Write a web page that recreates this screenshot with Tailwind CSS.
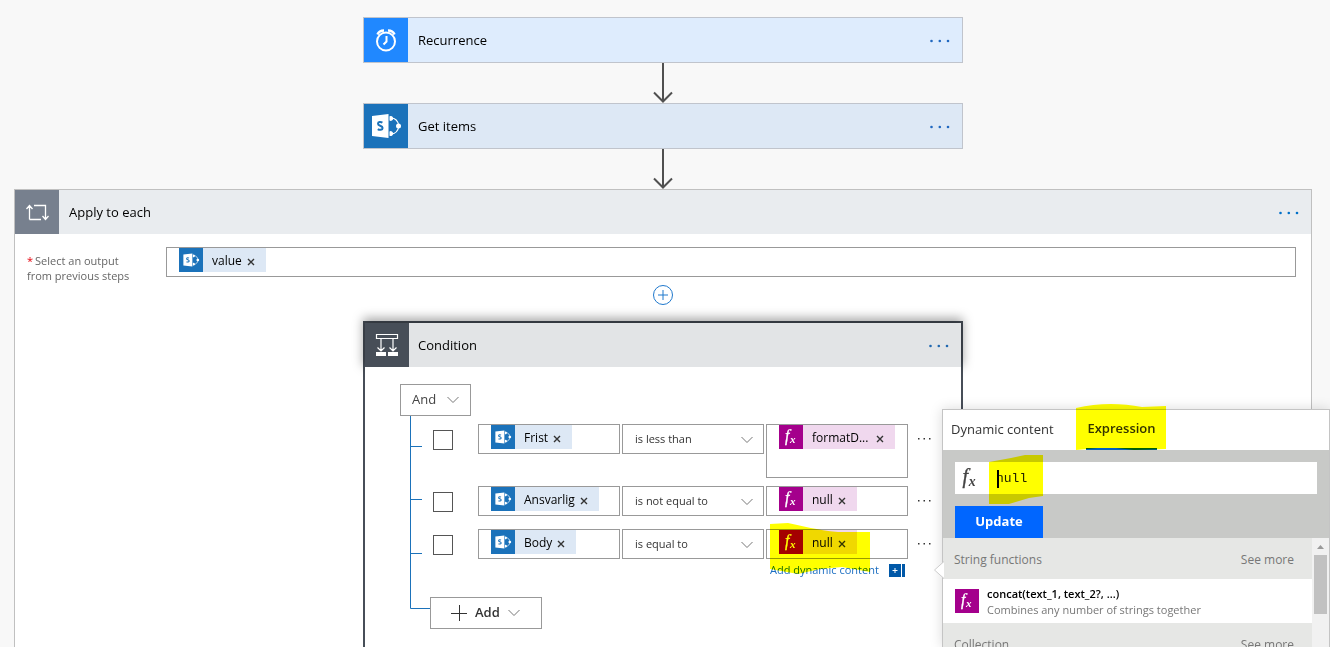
<!DOCTYPE html>
<html lang="en">
<head>
    <meta charset="UTF-8">
    <meta name="viewport" content="width=device-width, initial-scale=1.0">
    <title>Flow Designer</title>
    <script src="https://cdn.jsdelivr.net/npm/@tailwindcss/browser@4"></script>
</head>
<body class="relative h-screen overflow-hidden bg-[#f8f8f8] font-['Open_Sans','Noto_Sans',sans-serif] text-[13px] text-black">

    <!-- Shared icons -->
    <svg class="hidden">
        <symbol id="sharepoint" viewBox="0 0 44 44">
            <path fill="#fff" d="M8 12 24.500 10v24L8 32z"/>
            <path fill="none" stroke="#1b72ba" stroke-width="2" d="M18.400 18.600c-1.600-1-4.400-.9-4.400 1.100 0 2.300 4.600 1.700 4.600 4.200 0 2.200-3.200 2.300-4.800 1.200"/>
            <path fill="none" stroke="#fff" stroke-width="1.200" d="M27 14c4.500 0 7 3 8 8-1 5-3.500 8-8 8"/>
            <path fill="#fff" d="M25.500 12.200a2.500 2.500 0 1 1 0 4.400zM25.500 27.400a2.500 2.500 0 1 1 0 4.400z"/>
            <circle cx="34.500" cy="22" r="2.500" fill="#fff"/>
        </symbol>
        <symbol id="fx" viewBox="0 0 24 24">
            <text x="6" y="16" font-family="Liberation Serif, serif" font-style="italic" font-size="16" stroke="currentColor" stroke-width=".3" fill="currentColor">f</text>
            <text x="11" y="18" font-family="Liberation Serif, serif" font-style="italic" font-weight="bold" font-size="11" fill="currentColor">x</text>
        </symbol>
        <symbol id="dots" viewBox="0 0 22 4">
            <circle cx="2.500" cy="2" r="1.300" fill="currentColor"/>
            <circle cx="10.800" cy="2" r="1.300" fill="currentColor"/>
            <circle cx="19" cy="2" r="1.300" fill="currentColor"/>
        </symbol>
        <symbol id="close" viewBox="0 0 8 8">
            <path stroke="#333" stroke-width="1.400" d="M1 1l6 6M7 1L1 7"/>
        </symbol>
        <symbol id="chevron" viewBox="0 0 12 8">
            <path fill="none" stroke="#777" d="M.5 1 6 6.500 11.500 1"/>
        </symbol>
        <symbol id="arrow" viewBox="0 0 20 40">
            <path fill="none" stroke="#505050" stroke-width="2" d="M10 0v38M1 29.500l9 9 9-9"/>
        </symbol>
    </svg>

    <main class="ml-[14px] mr-[18px] flex h-full flex-col items-center pt-[17px]">
        <section class="flex h-[46px] w-full max-w-[600px] shrink-0 items-center border border-[#c0c4cc] bg-[#deecfd] pr-[11px]">
            <div class="h-11 w-11 bg-[#2088ff]">
                <svg class="h-11 w-11" viewBox="0 0 44 44" fill="none" stroke="#fff" stroke-width="2">
                    <circle cx="22" cy="23.500" r="9"/>
                    <path d="M22.500 18v5.500L19.500 26.500"/>
                    <path stroke-width="2.500" d="M13.500 16.500c1-2.500 3.500-4 6.500-4M30.500 16.500c-1-2.500-3.500-4-6.500-4"/>
                </svg>
            </div>
            <h2 class="flex-1 pl-[10px] pt-[2px]">Recurrence</h2>
            <button aria-label="More" class="pt-[2px] text-[#2068c0]"><svg class="h-1 w-[22px]"><use href="#dots"/></svg></button>
        </section>
        <svg class="h-10 w-5 shrink-0"><use href="#arrow"/></svg>
        <section class="flex h-[46px] w-full max-w-[600px] shrink-0 items-center border border-[#c0c4cc] bg-[#dde8f5] pr-[11px]">
            <svg class="h-11 w-11 bg-[#1b72ba]"><use href="#sharepoint"/></svg>
            <h2 class="flex-1 pl-[10px] pt-[2px]">Get items</h2>
            <button aria-label="More" class="pt-[2px] text-[#2068c0]"><svg class="h-1 w-[22px]"><use href="#dots"/></svg></button>
        </section>
        <svg class="h-10 w-5 shrink-0"><use href="#arrow"/></svg>

        <!-- Apply to each -->
        <section class="flex w-full flex-1 flex-col border border-b-0 border-[#c0c0c0] bg-white">
            <header class="flex h-11 shrink-0 items-center bg-[#e9ecef] pr-[11px]">
                <svg class="h-11 w-11 bg-[#77808e]" viewBox="0 0 44 44" fill="none" stroke="#fff" stroke-width="1.300">
                    <path d="M14.500 29.500V16M11.500 19l3-3.500 3 3.500M19 15.500h11.500V29M27.500 26l3 3.500 3-3.500M26 29.500H14.500"/>
                </svg>
                <h2 class="flex-1 pl-[10px] pt-[2px]">Apply to each</h2>
                <button aria-label="More" class="pt-[2px] text-[#0070c8]"><svg class="h-1 w-[22px]"><use href="#dots"/></svg></button>
            </header>
            <div class="flex items-start pl-3 pr-[15px] pt-[13px]">
                <label for="output" class="w-[139px] pt-[6px] text-[11px] leading-[15px] text-[#666]"><span class="pr-[2px] text-red-600">*</span>Select an output<br>from previous steps</label>
                <div class="flex h-[30px] flex-1 items-start border border-[#999] pl-3">
                    <span class="flex h-6 items-center bg-[#dde8f5] pr-[11px] text-[12px]">
                        <svg class="h-6 w-6 bg-[#1b72ba]"><use href="#sharepoint"/></svg>
                        <span class="pl-[9px] pr-[5px] pt-[2px]">value</span>
                        <button aria-label="Remove value" class="pt-1"><svg class="h-2 w-2"><use href="#close"/></svg></button>
                    </span>
                    <input id="output" class="min-w-0 flex-1 outline-none">
                </div>
            </div>
            <button aria-label="Insert step" class="mt-[2px] self-center">
                <svg class="h-5 w-5" viewBox="0 0 20 20" fill="none" stroke="#1f78cc"><circle cx="10" cy="10" r="9.500"/><path d="M10 5v10M5 10h10"/></svg>
            </button>

            <!-- Condition -->
            <section class="mt-4 flex w-full max-w-[600px] flex-1 flex-col self-center border-2 border-b-0 border-[#474e58]">
                <header class="flex h-11 shrink-0 items-center bg-[#e2e4e6] pr-[11px] shadow-[0_-3px_10px_2px_rgba(0,0,0,0.35)]">
                    <svg class="h-11 w-11 bg-[#474e58]" viewBox="0 0 44 44" fill="none" stroke="#fff" stroke-width="1.200">
                        <path d="M11.500 11.500h21v4h-21zM16 16v12M28 16v12M12.500 24.500l3.500 3.500 3.500-3.500M24.500 24.500l3.500 3.500 3.500-3.500"/>
                        <path fill="#fff" stroke="none" d="M11 29h10v4H11zM23 29h10v4H23z"/>
                    </svg>
                    <h2 class="flex-1 pl-[9px] pt-[2px]">Condition</h2>
                    <button aria-label="More" class="pt-[2px] text-[#2068b0]"><svg class="h-1 w-[22px]"><use href="#dots"/></svg></button>
                </header>
                <div class="relative flex flex-1 flex-col items-start bg-white pl-[35px] pt-[17px]">
                    <!-- tree lines -->
                    <svg class="absolute left-[45px] top-[49px] h-[194px] w-5" viewBox="0 0 20 194" fill="none" stroke="#1b72ba">
                        <path d="M.5 0v192.500H20M0 30.500h12M0 83.500h12M0 137.500h12"/>
                    </svg>
                    <button class="flex h-8 w-[71px] items-center justify-between border border-[#999] px-[11px] text-[#444]">And <svg class="h-2 w-3"><use href="#chevron"/></svg></button>

                    <div class="flex flex-col gap-[8px] pl-[33px] pt-[8px] text-[12px]">
                        <div class="flex items-start gap-[2px]">
                            <input type="checkbox" aria-label="Frist row" class="mr-[23px] mt-[6px] h-5 w-5 appearance-none border border-[#555]">
                            <div class="flex h-[30px] w-[142px] items-start border border-[#999] pl-3">
                                <span class="flex h-6 items-center bg-[#dde8f5] pr-[11px]">
                                    <svg class="h-6 w-6 bg-[#1b72ba]"><use href="#sharepoint"/></svg>
                                    <span class="pl-[9px] pr-[5px] pt-[2px]">Frist</span>
                                    <button aria-label="Remove Frist" class="pt-1"><svg class="h-2 w-2"><use href="#close"/></svg></button>
                                </span>
                            </div>
                            <div class="relative">
                                <select aria-label="Operator" class="h-[30px] w-[142px] appearance-none border border-[#999] pl-3 text-[11px] text-[#333]"><option>is less than</option></select>
                                <svg class="pointer-events-none absolute right-[11px] top-3 h-2 w-3"><use href="#chevron"/></svg>
                            </div>
                            <div class="flex h-[54px] w-[142px] items-start border border-[#999] pl-3">
                                <span class="flex h-6 items-center bg-[#f0d8ee] pr-[11px]">
                                    <svg class="h-6 w-6 bg-[#a4008c] text-white"><use href="#fx"/></svg>
                                    <span class="pl-[9px] pr-[8px] pt-[2px]">formatD...</span>
                                    <button aria-label="Remove formatD" class="pt-1"><svg class="h-2 w-2"><use href="#close"/></svg></button>
                                </span>
                            </div>
                            <button aria-label="Row menu" class="ml-[6px] mt-[13px] text-[#333]"><svg class="h-1 w-4" viewBox="0 0 16 4" fill="currentColor"><path d="M2 1h1.500v1.500H2zM7.500 1H9v1.500H7.500zM13 1h1.500v1.500H13z"/></svg></button>
                        </div>
                        <div class="flex items-start gap-[2px]">
                            <input type="checkbox" aria-label="Ansvarlig row" class="mr-[23px] mt-[6px] h-5 w-5 appearance-none border border-[#555]">
                            <div class="flex h-[30px] w-[142px] items-start border border-[#999] pl-3">
                                <span class="flex h-6 items-center bg-[#dde8f5] pr-[11px]">
                                    <svg class="h-6 w-6 bg-[#1b72ba]"><use href="#sharepoint"/></svg>
                                    <span class="pl-[9px] pr-[5px] pt-[2px]">Ansvarlig</span>
                                    <button aria-label="Remove Ansvarlig" class="pt-1"><svg class="h-2 w-2"><use href="#close"/></svg></button>
                                </span>
                            </div>
                            <div class="relative">
                                <select aria-label="Operator" class="h-[30px] w-[142px] appearance-none border border-[#999] pl-3 text-[11px] text-[#333]"><option>is not equal to</option></select>
                                <svg class="pointer-events-none absolute right-[11px] top-3 h-2 w-3"><use href="#chevron"/></svg>
                            </div>
                            <div class="flex h-[30px] w-[142px] items-start border border-[#999] pl-3">
                                <span class="flex h-6 items-center bg-[#f0d8ee] pr-[11px]">
                                    <svg class="h-6 w-6 bg-[#a4008c] text-white"><use href="#fx"/></svg>
                                    <span class="pl-[9px] pr-[5px] pt-[2px]">null</span>
                                    <button aria-label="Remove null" class="pt-1"><svg class="h-2 w-2"><use href="#close"/></svg></button>
                                </span>
                            </div>
                            <button aria-label="Row menu" class="ml-[6px] mt-[13px] text-[#333]"><svg class="h-1 w-4" viewBox="0 0 16 4" fill="currentColor"><path d="M2 1h1.500v1.500H2zM7.500 1H9v1.500H7.500zM13 1h1.500v1.500H13z"/></svg></button>
                        </div>
                        <div class="flex items-start gap-[2px] pt-[5px]">
                            <input type="checkbox" aria-label="Body row" class="mr-[23px] mt-[6px] h-5 w-5 appearance-none border border-[#555]">
                            <div class="flex h-[30px] w-[142px] items-start border border-[#999] pl-3">
                                <span class="flex h-6 items-center bg-[#dde8f5] pr-[11px]">
                                    <svg class="h-6 w-6 bg-[#1b72ba]"><use href="#sharepoint"/></svg>
                                    <span class="pl-[9px] pr-[5px] pt-[2px]">Body</span>
                                    <button aria-label="Remove Body" class="pt-1"><svg class="h-2 w-2"><use href="#close"/></svg></button>
                                </span>
                            </div>
                            <div class="relative">
                                <select aria-label="Operator" class="h-[30px] w-[142px] appearance-none border border-[#999] pl-3 text-[11px] text-[#333]"><option>is equal to</option></select>
                                <svg class="pointer-events-none absolute right-[11px] top-3 h-2 w-3"><use href="#chevron"/></svg>
                            </div>
                            <div class="relative">
                                <div class="flex h-[30px] w-[142px] items-start border border-[#999] pl-3">
                                    <span class="flex h-6 items-center bg-[#f0d8ee] pr-[11px]">
                                        <svg class="h-6 w-6 bg-[#a4008c] text-white"><use href="#fx"/></svg>
                                        <span class="pl-[9px] pr-[5px] pt-[2px]">null</span>
                                        <button aria-label="Remove null" class="pt-1"><svg class="h-2 w-2"><use href="#close"/></svg></button>
                                    </span>
                                </div>
                                <a href="#" class="flex items-center justify-between pl-1 pr-[3px] pt-[2px] text-[11px] leading-[18px] text-[#1b6ec2]">Add dynamic content
                                    <svg class="h-[13px] w-4" viewBox="0 0 16 13"><path fill="#0058a8" d="M0 0h12v13H0zM13 0h3v13h-3z"/><path stroke="#fff" d="M3.500 6.500h5M6 4v5"/></svg>
                                </a>
                                <svg class="pointer-events-none absolute -top-[6px] left-1 h-[52px] w-[100px] mix-blend-multiply" viewBox="0 0 100 52">
                                    <path fill="#ff0" d="M0 1 18 0c16 3 28 7 50 9h32v40l-28-5-22 2-22 5-28-5z"/>
                                </svg>
                            </div>
                            <button aria-label="Row menu" class="ml-[6px] mt-[13px] text-[#333]"><svg class="h-1 w-4" viewBox="0 0 16 4" fill="currentColor"><path d="M2 1h1.500v1.500H2zM7.500 1H9v1.500H7.500zM13 1h1.500v1.500H13z"/></svg></button>
                        </div>
                    </div>

                    <button class="ml-[30px] mt-[18px] flex h-8 w-[112px] items-center border border-[#999] pl-5 font-semibold text-[#333]">
                        <svg class="mr-2 h-4 w-4" viewBox="0 0 16 16"><path stroke="#333" d="M8.500 0v16M0 8.500h16"/></svg>
                        Add
                        <svg class="ml-2 h-2 w-3"><use href="#chevron"/></svg>
                    </button>
                </div>
            </section>
        </section>
    </main>

    <!-- Expression panel -->
    <aside class="absolute bottom-0 right-0 top-[409px] flex w-[388px] flex-col border border-b-0 border-[#c4c4c4] bg-white shadow-[0_0_12px_rgba(0,0,0,0.15)]">
        <svg class="absolute -left-[9px] top-[151px] h-[18px] w-[10px]" viewBox="0 0 10 18"><path fill="#fff" stroke="#ccc" d="M10 .5.500 9 10 17.500"/></svg>
        <nav class="flex h-10 shrink-0 pl-2 text-[13px] text-[#333]">
            <button class="w-[135px] text-left">Dynamic content</button>
            <button class="relative w-[71px] border-b-2 border-[#0060c0] font-semibold">Expression
                <svg class="pointer-events-none absolute -left-[10px] -top-[6px] h-[46px] w-[90px] mix-blend-multiply" viewBox="0 0 90 46">
                    <path fill="#ff0" d="M0 4C22-1 44-1 66 3l24-1v43l-32 1-18-2-18 0-22 2z"/>
                </svg>
            </button>
        </nav>
        <div class="bg-[#c8c9c7] px-3 pt-3">
            <div class="relative flex h-8 items-center bg-white">
                <label for="expression" class="w-[41px] text-[#444]"><svg class="h-[30px] w-[30px]"><use href="#fx"/></svg></label>
                <input id="expression" value="null" class="h-8 min-w-0 flex-1 font-['Liberation_Mono',monospace] text-[13px] text-[#222] outline-none">
                <span class="absolute left-[42px] top-2 h-[18px] w-[2px] bg-black"></span>
                <svg class="pointer-events-none absolute -top-[7px] left-[34px] h-[50px] w-[54px] mix-blend-multiply" viewBox="0 0 54 50">
                    <path fill="#ff0" d="M0 7 22 3 36 0h18v41l-14 2-20 6H0z"/>
                </svg>
            </div>
            <button class="mt-3 block h-8 w-[88px] bg-[#0066ff] font-bold text-white">Update</button>
        </div>
        <div class="flex flex-1 overflow-hidden">
            <div class="flex-1">
                <div class="flex h-[41px] items-center justify-between bg-[#e6e7e5] pl-[11px] pr-[18px] pt-[2px] text-[12px] text-[#777]"><h3>String functions</h3><a href="#">See more</a></div>
                <div class="flex h-11 items-center gap-2 pl-3 text-[11px] leading-4">
                    <svg class="h-6 w-6 bg-[#a4008c] text-white"><use href="#fx"/></svg>
                    <div class="pt-[2px]">
                        <p class="font-semibold">concat(text_1, text_2?, ...)</p>
                        <p class="text-[#777]">Combines any number of strings together</p>
                    </div>
                </div>
                <div class="flex h-[41px] items-center justify-between bg-[#e6e7e5] pl-[11px] pr-[18px] pt-[2px] text-[12px] text-[#777]"><h3>Collection</h3><a href="#">See more</a></div>
            </div>
            <div class="flex w-[17px] flex-col items-center bg-[#f1f1f1] pt-[7px]">
                <svg class="h-1 w-[7px]" viewBox="0 0 7 4"><path fill="#999" d="M0 4 3.500 0 7 4z"/></svg>
                <div class="mt-[6px] h-[59px] w-[13px] bg-[#c1c1c1]"></div>
            </div>
        </div>
    </aside>
</body>
</html>
